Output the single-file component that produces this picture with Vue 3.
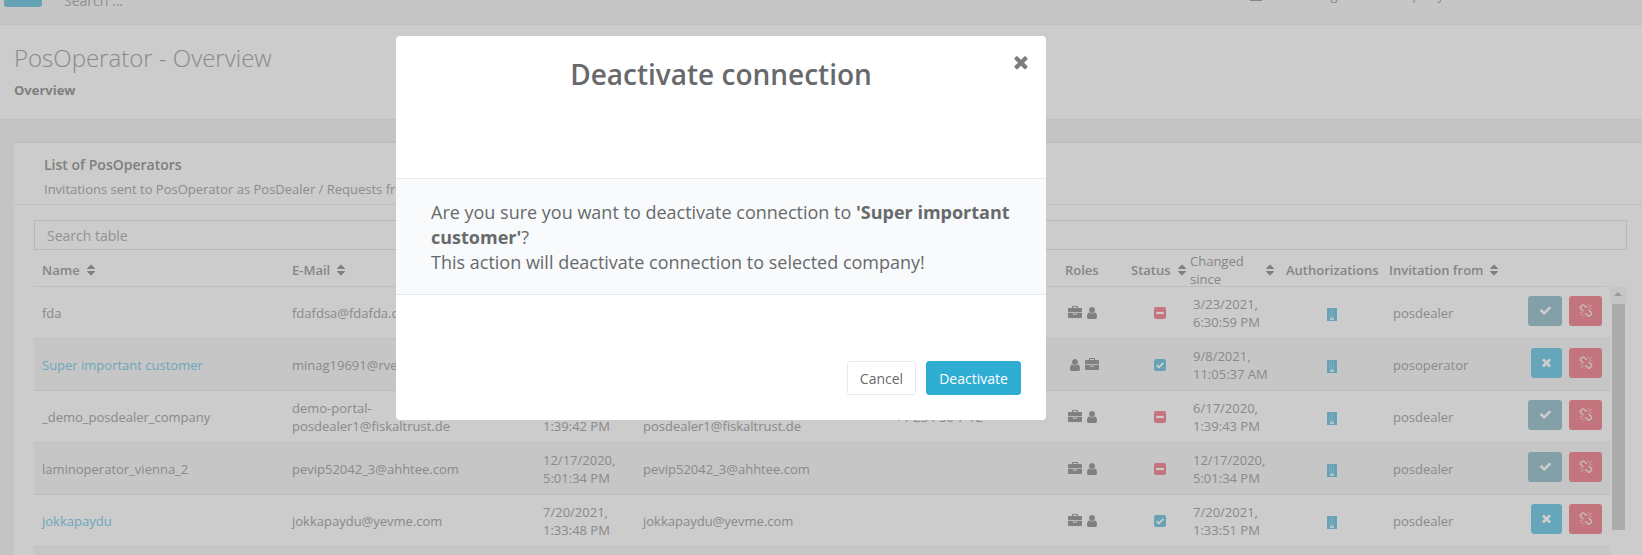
<template>
  <div class="page">
    <header class="topbar">
      <button class="menu-btn" type="button"></button>
      <span class="top-search">Search ...</span>
      <span class="top-right">
        <span class="top-mark"></span>
        <span class="top-user">Management company</span>
      </span>
    </header>

    <section class="page-head">
      <h1>PosOperator - Overview</h1>
      <strong>Overview</strong>
    </section>

    <main class="content">
      <div class="card">
        <div class="card-title">
          <h5>List of PosOperators</h5>
          <p>Invitations sent to PosOperator as PosDealer / Requests from PosOperator to PosDealer</p>
        </div>
        <div class="card-body">
          <input class="table-search" type="text" placeholder="Search table" />

          <div class="table-wrap">
            <div class="table-main">
              <div class="grid-row thead">
                <div v-for="col in columns" :key="col.label" class="th">
                  <span>{{ col.label }}</span>
                  <svg v-if="col.sort" class="sort" viewBox="0 0 1792 1792"><path :d="icons.sort" /></svg>
                </div>
                <div class="th"></div>
              </div>

              <div
                v-for="(row, i) in rows"
                :key="row.name"
                class="grid-row tr"
                :class="{ striped: i % 2 === 1 }"
              >
                <div class="td" :class="{ link: row.linked }">{{ row.name }}</div>
                <div class="td">{{ row.email }}</div>
                <div class="td">{{ row.created }}</div>
                <div class="td">{{ row.contact }}</div>
                <div class="td">{{ row.phone }}</div>
                <div class="td roles">
                  <svg v-for="role in row.roles" :key="role" class="role" viewBox="0 0 1792 1792"><path :d="icons[role]" /></svg>
                </div>
                <div class="td status">
                  <svg v-if="row.active" class="state" viewBox="0 0 16 16">
                    <rect width="16" height="16" rx="3" fill="#80cbe4" />
                    <path d="M3.500 8.200l3 3 6-6" fill="none" stroke="#fff" stroke-width="2.400" />
                  </svg>
                  <svg v-else class="state" viewBox="0 0 16 16">
                    <rect width="16" height="16" rx="3" fill="#f5929b" />
                    <rect x="3" y="6.500" width="10" height="3" fill="#fff" />
                  </svg>
                </div>
                <div class="td changed">{{ row.changed }}</div>
                <div class="td auth">
                  <svg class="building" viewBox="0 0 10 13">
                    <rect width="10" height="13" rx="0.500" fill="#80cbe4" />
                    <path d="M2 2h6M2 4h6M2 6h6M2 8h6" stroke="#b4e2f0" stroke-width="1" stroke-dasharray="1 1" />
                    <rect x="3" y="9.500" width="4" height="2.500" fill="#e6f5fa" />
                  </svg>
                </div>
                <div class="td invited">{{ row.from }}</div>
                <div class="td actions">
                  <button class="btn" :class="row.active ? 'btn-blue' : 'btn-teal'" type="button">
                    <svg viewBox="0 0 1792 1792"><path :d="row.active ? icons.times : icons.check" /></svg>
                  </button>
                  <button class="btn btn-red" type="button">
                    <svg viewBox="0 0 1792 1792"><path :d="icons.unlink" /></svg>
                  </button>
                </div>
              </div>
              <div class="tr striped"></div>
            </div>

            <div class="scrollbar">
              <div class="scroll-up"></div>
              <div class="scroll-thumb"></div>
            </div>
          </div>
        </div>
      </div>
    </main>

    <div class="overlay">
      <div class="modal">
        <div class="modal-header">
          <h4>Deactivate connection</h4>
          <svg class="close" viewBox="0 0 1792 1792"><path :d="icons.times" /></svg>
        </div>
        <div class="modal-body">
          Are you sure you want to deactivate connection to <b>'Super important customer'</b>?<br />
          This action will deactivate connection to selected company!
        </div>
        <div class="modal-footer">
          <button class="modal-btn cancel" type="button">Cancel</button>
          <button class="modal-btn confirm" type="button">Deactivate</button>
        </div>
      </div>
    </div>
  </div>
</template>

<script setup>
const icons = {
  sort: 'M1408 1088q0 26-19 45l-448 448q-19 19-45 19t-45-19l-448-448q-19-19-19-45t19-45 45-19h896q26 0 45 19t19 45zm0-384q0 26-19 45t-45 19h-896q-26 0-45-19t-19-45 19-45l448-448q19-19 45-19t45 19l448 448q19 19 19 45z',
  check: 'M1671 566q0 40-28 68l-724 724-136 136q-28 28-68 28t-68-28l-136-136-362-362q-28-28-28-68t28-68l136-136q28-28 68-28t68 28l294 295 656-657q28-28 68-28t68 28l136 136q28 28 28 68z',
  times: 'M1490 1322q0 40-28 68l-136 136q-28 28-68 28t-68-28l-294-294-294 294q-28 28-68 28t-68-28l-136-136q-28-28-28-68t28-68l294-294-294-294q-28-28-28-68t28-68l136-136q28-28 68-28t68 28l294 294 294-294q28-28 68-28t68 28l136 136q28 28 28 68t-28 68l-294 294 294 294q28 28 28 68z',
  user: 'M1536 1399q0 109-62.500 187t-150.500 78h-854q-88 0-150.500-78t-62.500-187q0-85 8.500-160.500t31.500-152 58.500-131 94-89 134.500-34.500q131 128 313 128t313-128q76 0 134.500 34.500t94 89 58.500 131 31.500 152 8.500 160.500zm-256-887q0 159-112.500 271.500t-271.500 112.500-271.500-112.500-112.500-271.500 112.500-271.500 271.500-112.500 271.500 112.500 112.500 271.500z',
  briefcase: 'M640 256h512v-128h-512v128zm1152 640v480q0 66-47 113t-113 47h-1472q-66 0-113-47t-47-113v-480h672v160q0 26 19 45t45 19h320q26 0 45-19t19-45v-160h672zm-768 0v128h-256v-128h256zm768-480v384h-1792v-384q0-66 47-113t113-47h352v-160q0-40 28-68t68-28h576q40 0 68 28t28 68v160h352q66 0 113 47t47 113z',
  unlink: 'M503 1271l-256 256q-10 9-23 9-12 0-23-9-9-10-9-23t9-23l256-256q10-9 23-9t23 9q9 10 9 23t-9 23zm169 41v320q0 14-9 23t-23 9-23-9-9-23v-320q0-14 9-23t23-9 23 9 9 23zm-224-224q0 14-9 23t-23 9h-320q-14 0-23-9t-9-23 9-23 23-9h320q14 0 23 9t9 23zm1264 128q0 120-85 203l-147 146q-83 83-203 83-121 0-204-85l-334-335q-21-21-42-56l239-18 273 274q27 27 68 27.500t68-26.500l147-146q28-28 28-67 0-40-28-68l-274-275 18-239q35 21 56 42l336 336q84 86 84 204zm-617-724l-239 18-273-274q-28-28-68-28-39 0-68 27l-147 146q-28 28-28 67 0 40 28 68l274 274-18 240q-35-21-56-42l-336-336q-84-86-84-204 0-120 85-203l147-146q83-83 203-83 121 0 204 85l334 335q21 21 42 56zm633 84q0 14-9 23t-23 9h-320q-14 0-23-9t-9-23 9-23 23-9h320q14 0 23 9t9 23zm-544-544v320q0 14-9 23t-23 9-23-9-9-23v-320q0-14 9-23t23-9 23 9 9 23zm407 151l-256 256q-11 9-23 9t-23-9q-9-10-9-23t9-23l256-256q10-9 23-9t23 9q9 10 9 23t-9 23z'
}

const columns = [
  { label: 'Name', sort: true },
  { label: 'E-Mail', sort: true },
  { label: 'Created', sort: true },
  { label: 'Contact', sort: true },
  { label: 'Phone', sort: true },
  { label: 'Roles', sort: false },
  { label: 'Status', sort: true },
  { label: 'Changed since', sort: true },
  { label: 'Authorizations', sort: false },
  { label: 'Invitation from', sort: true }
]

const rows = [
  {
    name: 'fda',
    email: 'fdafdsa@fdafda.com',
    created: '3/23/2021, 6:30:58 PM',
    contact: 'fdafdsa@fdafda.com',
    phone: '',
    roles: ['briefcase', 'user'],
    active: false,
    changed: '3/23/2021, 6:30:59 PM',
    from: 'posdealer'
  },
  {
    name: 'Super important customer',
    linked: true,
    email: 'minag19691@rvemold.com',
    created: '9/8/2021, 11:05:36 AM',
    contact: 'minag19691@rvemold.com',
    phone: '',
    roles: ['user', 'briefcase'],
    active: true,
    changed: '9/8/2021, 11:05:37 AM',
    from: 'posoperator'
  },
  {
    name: '_demo_posdealer_company',
    email: 'demo-portal-posdealer1@fiskaltrust.de',
    created: '6/17/2020, 1:39:42 PM',
    contact: 'demo-portal-posdealer1@fiskaltrust.de',
    phone: '+1 234 56 7 12',
    roles: ['briefcase', 'user'],
    active: false,
    changed: '6/17/2020, 1:39:43 PM',
    from: 'posdealer'
  },
  {
    name: 'laminoperator_vienna_2',
    email: 'pevip52042_3@ahhtee.com',
    created: '12/17/2020, 5:01:34 PM',
    contact: 'pevip52042_3@ahhtee.com',
    phone: '',
    roles: ['briefcase', 'user'],
    active: false,
    changed: '12/17/2020, 5:01:34 PM',
    from: 'posdealer'
  },
  {
    name: 'jokkapaydu',
    linked: true,
    email: 'jokkapaydu@yevme.com',
    created: '7/20/2021, 1:33:48 PM',
    contact: 'jokkapaydu@yevme.com',
    phone: '',
    roles: ['briefcase', 'user'],
    active: true,
    changed: '7/20/2021, 1:33:51 PM',
    from: 'posdealer'
  }
]
</script>

<style scoped>
.page {
  position: relative;
  height: 555px;
  overflow: hidden;
  background: #f5f5f5;
  font-family: "Open Sans", sans-serif;
  font-size: 13px;
  color: #adadad;
}

/* Topbar, cut off by the top of the page */
.topbar {
  display: flex;
  align-items: flex-end;
  height: 25px;
  padding: 0 0 18px 4px;
  box-sizing: border-box;
  background: #f8f8f8;
  border-bottom: 1px solid #efefef;
  overflow: hidden;
}

.menu-btn {
  flex: none;
  width: 38px;
  height: 30px;
  margin-bottom: -1px;
  border: 0;
  border-radius: 3px;
  background: #80cbe4;
}

.top-search {
  margin-left: 22px;
  margin-bottom: -2px;
  font-size: 14px;
  line-height: 14px;
  color: #b5b5b5;
}

.top-right {
  display: flex;
  align-items: flex-end;
  margin-left: auto;
  margin-right: 148px;
  margin-bottom: 4px;
  line-height: 14px;
}

.top-mark {
  width: 12px;
  height: 1px;
  margin-right: 32px;
  margin-bottom: 1px;
  background: #a9a9a9;
}

.top-user {
  width: 200px;
  letter-spacing: 0.6px;
}

.page-head {
  height: 95px;
  padding: 18px 14px 0;
  box-sizing: border-box;
  background: #fff;
  border-bottom: 1px solid #efefef;
}

.page-head h1 {
  margin: 0;
  font-size: 24px;
  font-weight: 300;
  line-height: 30px;
  color: #adadad;
}

.page-head strong {
  display: block;
  margin-top: 9px;
  font-size: 13px;
  line-height: 17px;
  color: #a0a0a0;
}

.content {
  padding: 21px 0 0 14px;
}

.card {
  background: #fff;
  border-top: 2px solid #eeeeee;
}

.card-title {
  height: 62px;
  padding: 13px 30px 0;
  box-sizing: border-box;
  border-bottom: 1px solid #eeeeee;
}

.card-title h5 {
  margin: 0;
  font-size: 14px;
  font-weight: 600;
  line-height: 18px;
  color: #a0a0a0;
}

.card-title p {
  margin: 6px 0 0;
  font-size: 13px;
  line-height: 18px;
  color: #b0b0b0;
  white-space: nowrap;
}

.card-body {
  padding: 15px 15px 0 20px;
}

.table-search {
  display: block;
  width: 100%;
  height: 30px;
  padding: 0 12px;
  box-sizing: border-box;
  border: 1px solid #e5e6e7;
  background: #fff;
  font: inherit;
  font-size: 14px;
  outline: none;
}

.table-search::placeholder {
  color: #b8b8b8;
  opacity: 1;
}

.table-wrap {
  display: flex;
}

.table-main {
  flex: 1;
  min-width: 0;
}

.grid-row {
  display: grid;
  grid-template-columns: 250px 251px 100px 252px 170px 66px 59px 96px 103px 119px 110px;
}

.thead {
  height: 37px;
  padding-top: 2px;
  box-sizing: border-box;
  border-bottom: 1px solid #eeeeee;
  align-items: center;
  margin-right: 4px;
}

.th {
  display: flex;
  align-items: center;
  gap: 4px;
  padding: 0 1px 0 8px;
  font-size: 13px;
  font-weight: 600;
  line-height: 18px;
  color: #a8a8a8;
  min-width: 0;
  white-space: nowrap;
}

.th:nth-child(8) {
  font-weight: 400;
  justify-content: space-between;
  white-space: normal;
}

.th:nth-child(8) span {
  width: 60px;
}

.sort {
  flex: none;
  width: 14px;
  height: 14px;
  fill: #a0a0a0;
}

.tr {
  height: 52px;
  box-sizing: border-box;
  border-bottom: 1px solid #eeeeee;
}

.striped {
  background: #f8f8f8;
}

.td {
  display: flex;
  align-items: center;
  padding: 0 8px;
  line-height: 18px;
  min-width: 0;
  overflow-wrap: anywhere;
}

.link {
  color: #86d2eb;
}

.roles {
  padding-left: 11px;
  gap: 3px;
}

.role {
  width: 14px;
  height: 14px;
  fill: #a0a0a0;
}

.status {
  padding-left: 31px;
}

.state {
  width: 12px;
  height: 12px;
}

.changed {
  padding-left: 11px;
}

.auth {
  padding-left: 49px;
}

.building {
  width: 10px;
  height: 13px;
  margin-top: 3px;
}

.invited {
  padding-left: 12px;
}

.actions {
  justify-content: flex-end;
  gap: 7px;
  margin-top: -4px;
}

.btn {
  display: flex;
  align-items: center;
  justify-content: center;
  width: 33px;
  height: 30px;
  padding: 0;
  border: 0;
  border-radius: 3px;
}

.btn svg {
  width: 13px;
  height: 13px;
  fill: #fff;
}

.btn-teal {
  width: 34px;
  background: #a4c8d2;
}

.btn-blue {
  width: 31px;
  background: #80d0ea;
}

.btn-red {
  background: #f5929b;
}

.btn-red svg {
  width: 14px;
  height: 14px;
  fill: #f8e8e9;
}

.scrollbar {
  flex: none;
  width: 17px;
  margin-top: 37px;
  background: #fff;
}

.scroll-up {
  height: 17px;
  position: relative;
  background: #f8f8f8;
}

.scroll-up::after {
  content: '';
  position: absolute;
  left: 4px;
  top: 5px;
  border: 4px solid transparent;
  border-top: 0;
  border-bottom: 4px solid #c0c0c0;
}

.scroll-thumb {
  width: 13px;
  height: 226px;
  margin-left: 2px;
  background: #d8d8d8;
}

/* Backdrop and dialog */
.overlay {
  position: absolute;
  inset: 0;
  background: rgba(0, 0, 0, 0.2);
}

.modal {
  position: absolute;
  left: 396px;
  top: 36px;
  width: 650px;
  height: 384px;
  display: flex;
  flex-direction: column;
  background: #fff;
  border-radius: 4px;
  color: #676a6c;
  overflow: hidden;
}

.modal-header {
  position: relative;
  flex: none;
  height: 143px;
  box-sizing: border-box;
  padding-top: 18px;
  border-bottom: 1px solid #e7eaec;
  text-align: center;
}

.modal-header h4 {
  margin: 0;
  font-size: 28px;
  font-weight: 600;
  line-height: 40px;
}

.close {
  position: absolute;
  right: 15px;
  top: 16px;
  width: 20px;
  height: 20px;
  fill: #7d7d7d;
}

.modal-body {
  flex: none;
  height: 116px;
  padding: 21px 30px 0 35px;
  box-sizing: border-box;
  background: #f8fafb;
  border-bottom: 1px solid #e7eaec;
  font-size: 18px;
  line-height: 25px;
}

.modal-footer {
  flex: 1;
  display: flex;
  align-items: flex-end;
  justify-content: flex-end;
  gap: 10px;
  padding: 0 25px 25px;
}

.modal-btn {
  height: 34px;
  border-radius: 3px;
  font: inherit;
  font-size: 14px;
}

.cancel {
  width: 69px;
  background: #fff;
  border: 1px solid #e7eaec;
  color: #676a6c;
}

.confirm {
  width: 95px;
  background: #2eaed3;
  border: 1px solid #2eaed3;
  color: #fff;
}
</style>

<style>
html,
body {
  margin: 0;
  height: 555px;
  overflow: hidden;
}
</style>
